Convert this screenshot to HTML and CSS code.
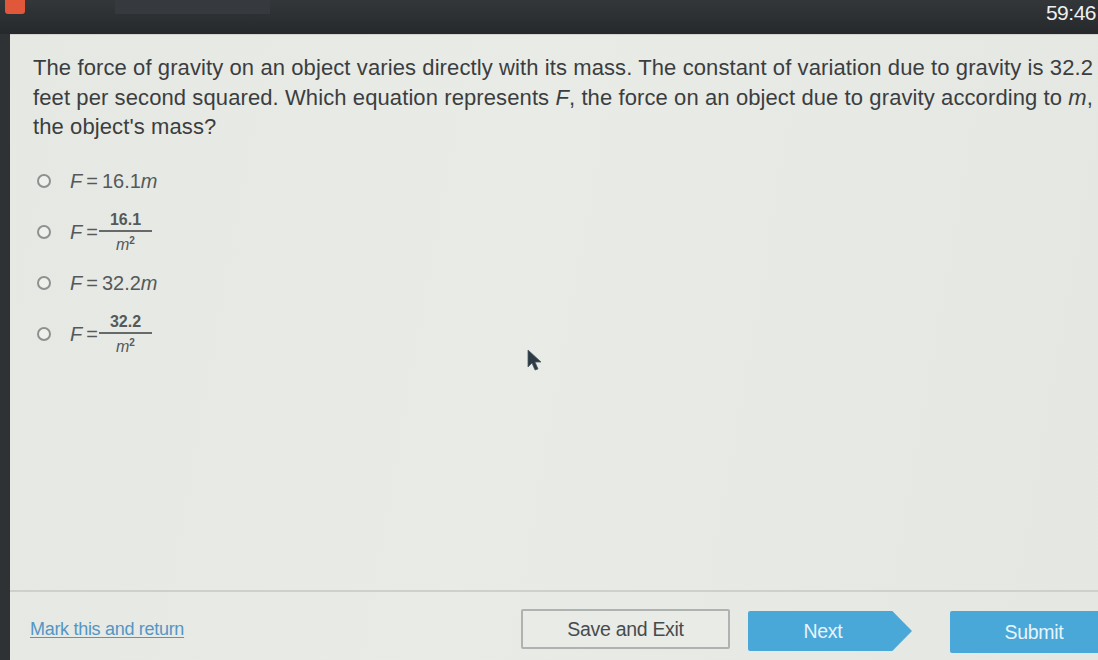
FILE: index.html
```html
<!DOCTYPE html>
<html>
<head>
<meta charset="utf-8">
<link rel="stylesheet" href="styles.css">
</head>
<body>
<div class="screen">
  <header class="topbar">
    <div class="topleft">
      <span class="redtab"></span>
      <span class="dimtabs"></span>
    </div>
    <span class="timer">59:46</span>
  </header>
  <div class="frame">
    <main class="panel">
      <p class="question">The force of gravity on an object varies directly with its mass. The constant of variation due to gravity is 32.2<br>feet per second squared. Which equation represents <i>F</i>, the force on an object due to gravity according to <i>m</i>,<br>the object's mass?</p>
      <ul class="options">
        <li class="opt"><span class="radio"></span><span class="eq"><i>F</i>&#8201;=&#8201;16.1<i>m</i></span></li>
        <li class="opt frac-row"><span class="radio"></span><span class="eq"><i>F</i>&#8201;=<span class="frac"><span class="num">16.1</span><span class="den"><i>m</i><sup>2</sup></span></span></span></li>
        <li class="opt"><span class="radio"></span><span class="eq"><i>F</i>&#8201;=&#8201;32.2<i>m</i></span></li>
        <li class="opt frac-row"><span class="radio"></span><span class="eq"><i>F</i>&#8201;=<span class="frac"><span class="num">32.2</span><span class="den"><i>m</i><sup>2</sup></span></span></span></li>
      </ul>
      <div class="spacer"></div>
      <footer class="footer">
        <a class="mark" href="#">Mark this and return</a>
        <div class="actions">
          <button class="btn save">Save and Exit</button>
          <button class="btn next">Next</button>
          <button class="btn submit">Submit</button>
        </div>
      </footer>
    </main>
  </div>
  <svg class="cursor" width="16" height="24" viewBox="0 0 16 24"><path d="M1 1 L1 18 L5 14 L8 21 L11 20 L8 13 L14 13 Z" fill="#2d3a44" stroke="#4a5a66" stroke-width="0.8"/></svg>
</div>
</body>
</html>
```
FILE: styles.css
```css
html, body {
  margin: 0;
  padding: 0;
  width: 1098px;
  height: 660px;
  overflow: hidden;
  background: #2b2f32;
}
.screen {
  position: relative;
  width: 1098px;
  height: 660px;
  display: flex;
  flex-direction: column;
  font-family: "Liberation Sans", Arial, sans-serif;
}
.topbar {
  height: 34px;
  flex: none;
  display: flex;
  justify-content: space-between;
  align-items: flex-start;
  background: linear-gradient(#33373a, #25292c);
}
.topleft {
  display: flex;
  align-items: flex-start;
  gap: 90px;
}
.redtab {
  display: block;
  width: 20px;
  height: 14px;
  margin-left: 5px;
  background: #e0573a;
  border-radius: 0 0 3px 3px;
}
.dimtabs {
  display: block;
  width: 155px;
  height: 14px;
  background: #363a3e;
}
.timer {
  color: #eef0f0;
  font-size: 21px;
  line-height: 21px;
  margin-top: 2px;
  margin-right: 2px;
  letter-spacing: -0.5px;
}
.frame {
  flex: 1;
  display: flex;
  padding-left: 10px;
  background: #2e3235;
}
.panel {
  flex: 1;
  display: flex;
  flex-direction: column;
  background: linear-gradient(100deg, #e6e8e3 0%, #e9ebe6 45%, #e4e7e2 100%);
  border-top: 1px solid #cfd2ce;
}
.question {
  margin: 18px 0 0 23px;
  font-size: 22px;
  line-height: 29.5px;
  color: #3b3e40;
  white-space: nowrap;
  letter-spacing: 0.1px;
}
.options {
  list-style: none;
  margin: 14px 0 0 27px;
  padding: 0;
  display: flex;
  flex-direction: column;
}
.opt {
  display: flex;
  align-items: center;
  gap: 19px;
  height: 51px;
  color: #55595b;
  font-size: 20px;
}
.radio {
  width: 10px;
  height: 10px;
  border: 2px solid #8d9190;
  border-radius: 50%;
  background: #eef0ec;
  flex: none;
}
.eq i { font-style: italic; }
.eq {
  display: flex;
  align-items: center;
  white-space: pre;
}
.frac {
  display: inline-flex;
  flex-direction: column;
  align-items: center;
  margin-left: 1px;
  font-size: 16px;
  line-height: 16px;
}
.num {
  padding: 0 11px 2px;
  border-bottom: 2px solid #666a6b;
  font-weight: bold;
}
.den {
  padding-top: 1px;
}
.den sup {
  font-size: 10px;
  vertical-align: 6px;
  font-weight: bold;
}
.spacer { flex: 1; }
.footer {
  height: 70px;
  box-sizing: border-box;
  padding: 6px 0 0 20px;
  border-top: 2px solid #cdd0cc;
  display: flex;
  align-items: center;
  justify-content: space-between;
}
.mark {
  color: #5496c4;
  font-size: 18px;
  text-decoration: underline;
  text-underline-offset: 2px;
  letter-spacing: -0.3px;
}
.actions {
  display: flex;
  align-items: center;
  gap: 18px;
  margin-right: -20px;
}
.btn {
  font-family: "Liberation Sans", Arial, sans-serif;
  font-size: 19.5px;
  height: 40px;
  border-radius: 2px;
  cursor: pointer;
  letter-spacing: -0.3px;
}
.save {
  width: 209px;
  background: #e9ebe7;
  color: #474b4d;
  border: 2px solid #aeb2b1;
}
.next {
  width: 164px;
  height: 40px;
  margin-top: 4px;
  border: none;
  color: #e7f4fb;
  background: #4aa8d8;
  clip-path: polygon(0 0, 88% 0, 100% 50%, 88% 100%, 0 100%);
  padding-right: 20px;
}
.submit {
  width: 168px;
  height: 42px;
  margin-top: 6px;
  margin-left: 20px;
  border: none;
  color: #e7f4fb;
  background: #4aa8d8;
}
.cursor {
  position: absolute;
  left: 527px;
  top: 349px;
}
```
